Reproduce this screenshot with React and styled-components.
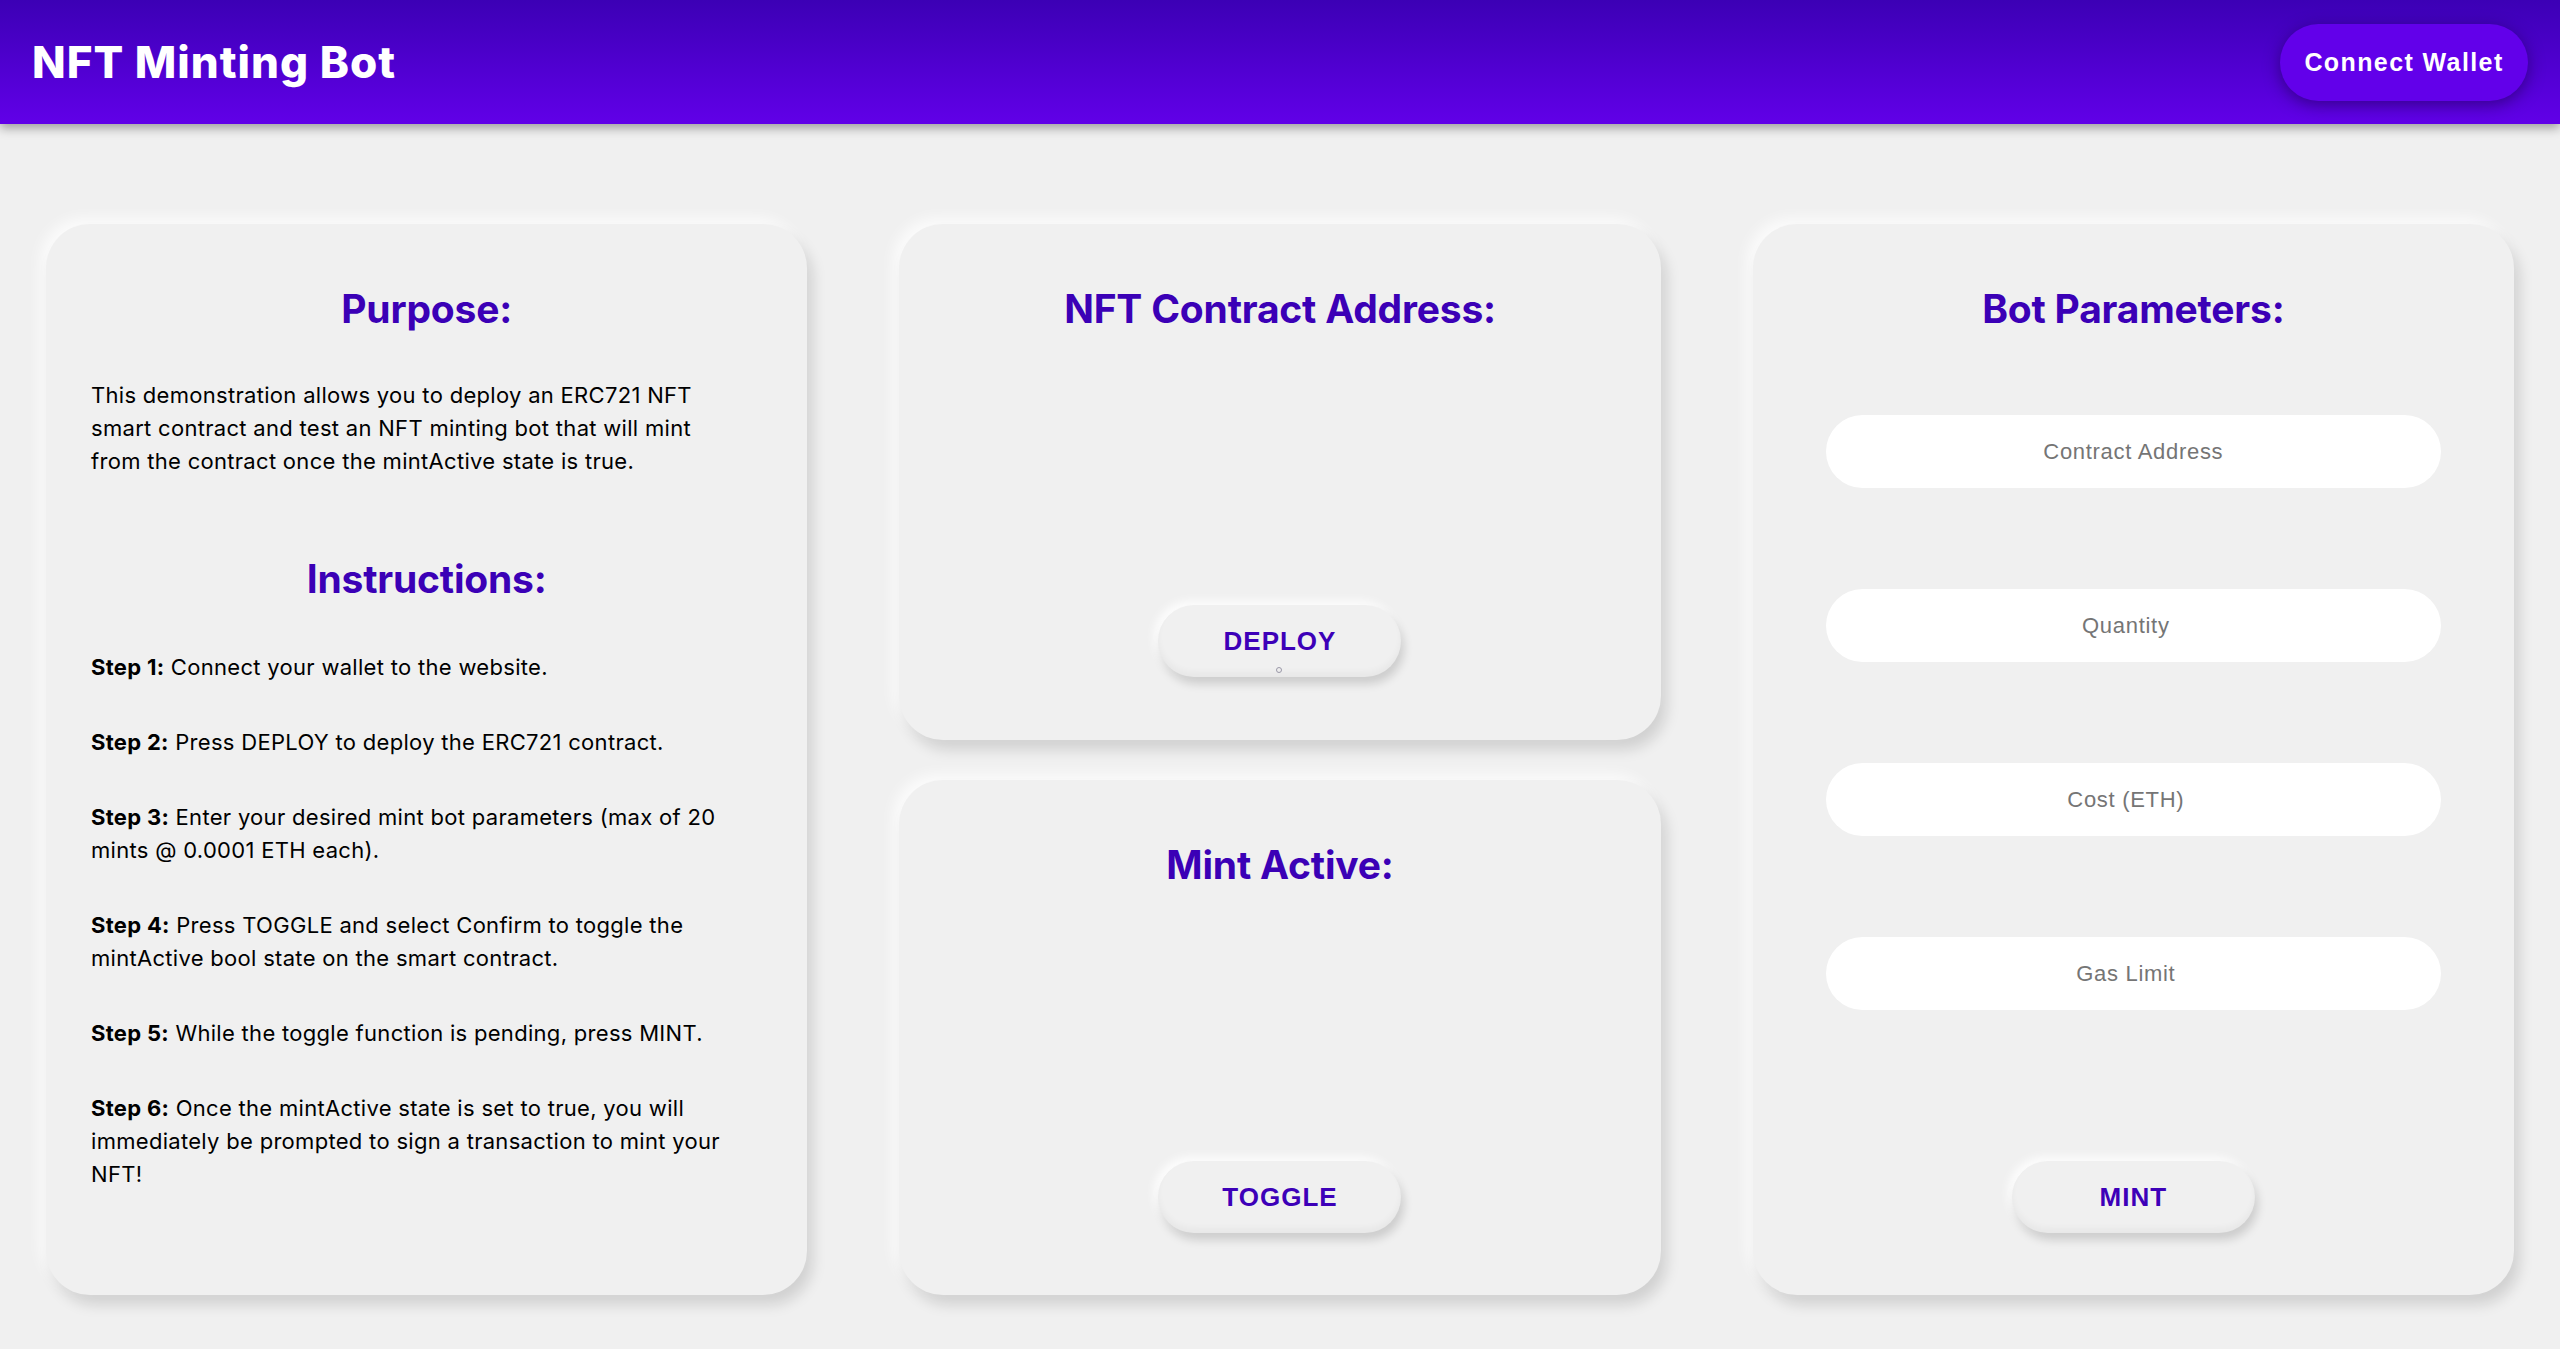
import React from "react";
import styled, { createGlobalStyle } from "styled-components";

const GlobalStyle = createGlobalStyle`
  html, body {
    margin: 0;
    padding: 0;
    background: #f0f0f0;
  }
  body {
    font-family: Inter, "Noto Sans", sans-serif;
  }
  * { box-sizing: border-box; }
`;

const Header = styled.header`
  height: 124px;
  display: flex;
  align-items: center;
  justify-content: space-between;
  padding: 0 32px 0 32px;
  background: linear-gradient(180deg, #3c00b5 0%, #6100e8 100%);
  box-shadow: 0 4px 10px rgba(0, 0, 0, 0.35);
  position: relative;
  z-index: 1;
`;

const Title = styled.h1`
  margin: 0;
  color: #ffffff;
  font-family: Inter, sans-serif;
  font-weight: 800;
  font-size: 44px;
  letter-spacing: 1px;
`;

const ConnectButton = styled.button`
  width: 248px;
  height: 77px;
  border: none;
  border-radius: 40px;
  background: #6200ea;
  color: #ffffff;
  font-family: "Liberation Sans", Arial, sans-serif;
  font-weight: 700;
  font-size: 25px;
  letter-spacing: 1.4px;
  box-shadow: 0 4px 16px rgba(20, 0, 60, 0.5);
  cursor: pointer;
`;

const Main = styled.main`
  display: grid;
  grid-template-columns: repeat(3, 1fr);
  column-gap: 92px;
  padding: 100px 46px 54px;
`;

const Column = styled.div`
  display: flex;
  flex-direction: column;
  gap: 40px;
`;

const Card = styled.section`
  background: #f0f0f0;
  border-radius: 44px;
  box-shadow: 6px 10px 14px rgba(0, 0, 0, 0.13), -6px -6px 14px rgba(255, 255, 255, 0.75);
  display: flex;
  flex-direction: column;
  align-items: ${(p) => (p.$align === "stretch" ? "stretch" : "center")};
  padding: 61px ${(p) => (p.$padR ? p.$padR : 45)}px ${(p) => (p.$padB ? p.$padB : 63)}px 45px;
  height: ${(p) => p.$height}px;
`;

const Heading = styled.h2`
  margin: 0;
  text-align: center;
  color: #3b00b6;
  font-family: Inter, sans-serif;
  font-weight: 700;
  font-size: 39px;
  line-height: 48px;
  letter-spacing: -0.2px;
  margin-top: ${(p) => p.$mt || 0}px;
  padding-right: ${(p) => p.$shift || 0}px;
`;

const Text = styled.p`
  margin: 0;
  margin-top: ${(p) => p.$mt || 0}px;
  color: #000;
  font-family: Inter, sans-serif;
  font-size: 22px;
  line-height: 33px;
  letter-spacing: 0.3px;
`;

const Steps = styled.div`
  display: flex;
  flex-direction: column;
  gap: 42px;
  margin-top: 48px;
`;

const Bold = styled.b`
  font-weight: 700;
`;

const Spacer = styled.div`
  flex: 1;
`;

const SoftButton = styled.button`
  position: relative;
  width: 243px;
  height: 72px;
  flex-shrink: 0;
  border: none;
  border-radius: 36px;
  background: #f0f0f0;
  color: #3d00b8;
  font-family: "Liberation Sans", Arial, sans-serif;
  font-weight: 700;
  font-size: 26px;
  letter-spacing: 1px;
  box-shadow: 3px 7px 10px rgba(0, 0, 0, 0.15), -4px -4px 10px rgba(255, 255, 255, 0.9),
    inset 0 -5px 6px rgba(0, 0, 0, 0.035);
  cursor: pointer;
`;

const Dot = styled.span`
  position: absolute;
  left: 50%;
  top: 62px;
  width: 6px;
  height: 6px;
  margin-left: -4px;
  border: 1px solid #9a98a8;
  border-radius: 50%;
`;

const Inputs = styled.div`
  display: flex;
  flex-direction: column;
  align-items: center;
  gap: 101px;
  margin-top: 82px;
`;

const Input = styled.input`
  width: 615px;
  height: 73px;
  border: none;
  border-radius: 37px;
  background: #ffffff;
  outline: none;
  text-align: center;
  font-family: "Liberation Sans", Arial, sans-serif;
  font-size: 22px;
  letter-spacing: 0.7px;
  color: #333;
  &::placeholder {
    color: #757575;
  }
`;

export default function App() {
  return (
    <>
      <GlobalStyle />
      <Header>
        <Title>NFT Minting Bot</Title>
        <ConnectButton>Connect Wallet</ConnectButton>
      </Header>
      <Main>
        <Card $height={1071} $align="stretch" $padR={20}>
          <Heading $shift={25}>Purpose:</Heading>
          <Text $mt={46}>
            This demonstration allows you to deploy an ERC721 NFT
            <br />
            smart contract and test an NFT minting bot that will mint
            <br />
            from the contract once the mintActive state is true.
          </Text>
          <Heading $mt={77} $shift={25}>
            Instructions:
          </Heading>
          <Steps>
            <Text>
              <Bold>Step 1:</Bold> Connect your wallet to the website.
            </Text>
            <Text>
              <Bold>Step 2:</Bold> Press DEPLOY to deploy the ERC721 contract.
            </Text>
            <Text>
              <Bold>Step 3:</Bold> Enter your desired mint bot parameters (max of 20
              <br />
              mints @ 0.0001 ETH each).
            </Text>
            <Text>
              <Bold>Step 4:</Bold> Press TOGGLE and select Confirm to toggle the
              <br />
              mintActive bool state on the smart contract.
            </Text>
            <Text>
              <Bold>Step 5:</Bold> While the toggle function is pending, press MINT.
            </Text>
            <Text>
              <Bold>Step 6:</Bold> Once the mintActive state is set to true, you will
              <br />
              immediately be prompted to sign a transaction to mint your
              <br />
              NFT!
            </Text>
          </Steps>
        </Card>
        <Column>
          <Card $height={516}>
            <Heading>NFT Contract Address:</Heading>
            <Spacer />
            <SoftButton>
              DEPLOY
              <Dot />
            </SoftButton>
          </Card>
          <Card $height={515} $padB={62}>
            <Heading>Mint Active:</Heading>
            <Spacer />
            <SoftButton>TOGGLE</SoftButton>
          </Card>
        </Column>
        <Card $height={1071} $padB={62}>
          <Heading>Bot Parameters:</Heading>
          <Inputs>
            <Input type="text" placeholder="Contract Address" />
            <Input type="number" placeholder="Quantity" />
            <Input type="number" placeholder="Cost (ETH)" />
            <Input type="number" placeholder="Gas Limit" />
          </Inputs>
          <Spacer />
          <SoftButton>MINT</SoftButton>
        </Card>
      </Main>
    </>
  );
}
